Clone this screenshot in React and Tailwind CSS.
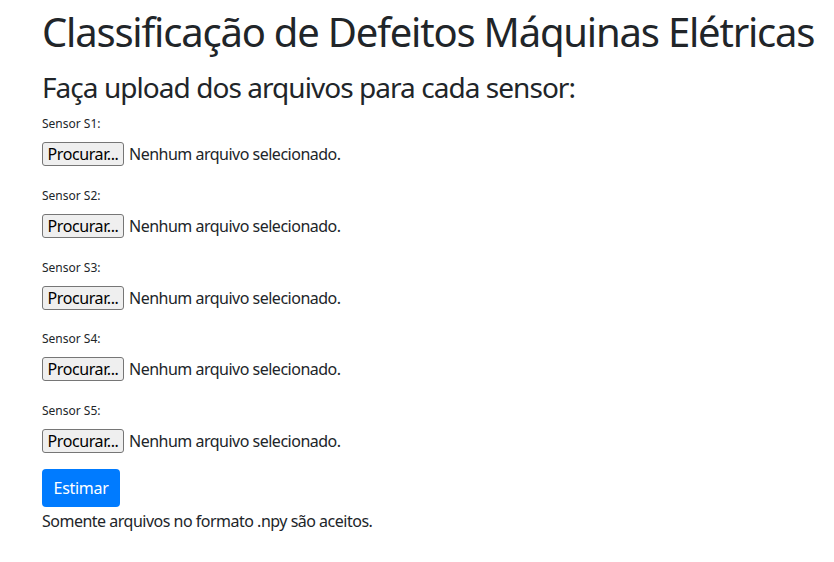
const sensors = ['S1', 'S2', 'S3', 'S4', 'S5'];

function FileField({ id }) {
  return (
    <div className="mb-[20.75px]">
      <label className="block text-[12px] leading-[18px] text-[#212529] mb-[9px]">Sensor {id}:</label>
      <div className="flex items-center h-[24px]">
        <span className="h-[24px] w-[82px] flex items-center justify-center rounded-[3px] border border-[#767676] bg-[#efefef] text-[16px] text-black tracking-[-0.4px]">
          Procurar...
        </span>
        <span className="ml-[5px] text-[16px] tracking-[-0.5px] text-[#212529]">Nenhum arquivo selecionado.</span>
      </div>
    </div>
  );
}

export default function App() {
  return (
    <div className="min-h-screen bg-white font-['Noto_Sans',sans-serif] text-[#212529]">
      <div className="pl-[42px] pt-[8px]">
        <h1 className="whitespace-nowrap text-[40px] leading-[48px] font-normal tracking-[-1.2px]">Classificação de Defeitos Máquinas Elétricas</h1>
        <h3 className="mt-[14px] whitespace-nowrap text-[28px] leading-[34px] font-normal tracking-[-0.95px]">Faça upload dos arquivos para cada sensor:</h3>
        <div className="mt-[11px]">
          {sensors.map(s => <FileField key={s} id={s} />)}
        </div>
        <button className="-mt-[5px] h-[38px] w-[78px] rounded-[4px] bg-[#007bff] text-white text-[16px] tracking-[-0.3px]">Estimar</button>
        <p className="mt-[2px] text-[16px] tracking-[-0.5px]">Somente arquivos no formato .npy são aceitos.</p>
      </div>
    </div>
  );
}
